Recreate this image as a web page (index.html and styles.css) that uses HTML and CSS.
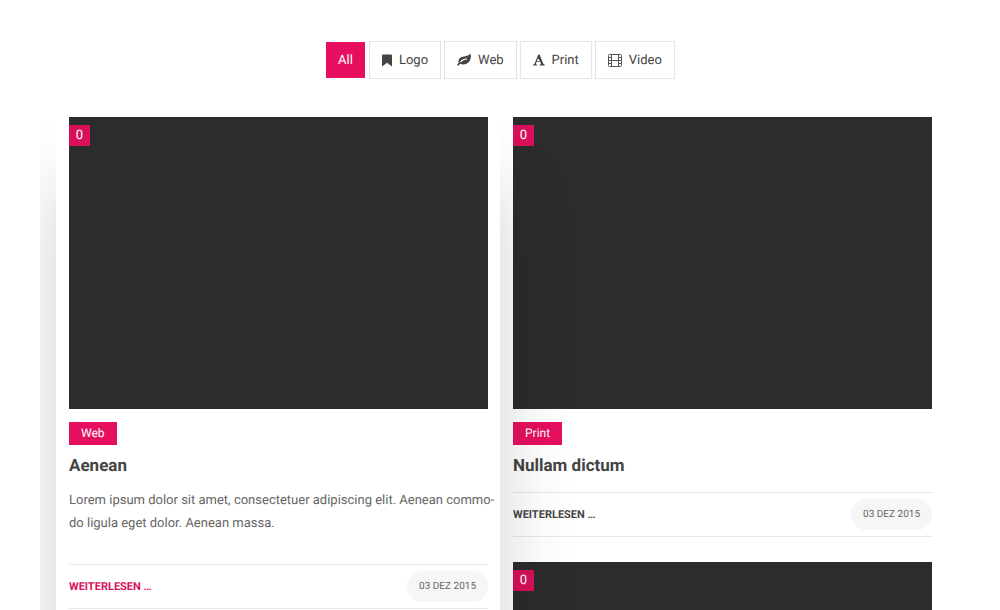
FILE: index.html
```html
<!DOCTYPE html>
<html lang="de">
<head>
<meta charset="utf-8">
<meta name="viewport" content="width=device-width, initial-scale=1">
<title>Portfolio</title>
<link rel="stylesheet" href="styles.css">
</head>
<body>
<main class="portfolio">
  <nav class="filters">
    <button class="filter active" type="button">All</button>
    <button class="filter" type="button">
      <svg class="icon-bookmark" viewBox="0 0 10 13" width="10" height="13"><path d="M1 .5h8q1 0 1 1V12.500L5 8.800 0 12.500V1.500q0-1 1-1z"/></svg>Logo
    </button>
    <button class="filter" type="button">
      <svg viewBox="0 0 14 14" width="14" height="14"><path fill-rule="evenodd" d="M13.600 1.200C14.600 5 13 9.600 9 11c-2 .7-4.300.5-5.900-.3L1.500 12.400Q.5 13 .2 12 .2 11.200 1.700 9.800 1 7.600 2.400 5.600C4.600 2.600 9.500 3.900 12 1.700Q13.100.7 13.600 1.200zM3.900 9.200C6 7.200 7.500 6.900 9.700 6.600Q10.600 6.300 10 5.600C7.300 5.500 4.900 6.400 3.100 8.400Q2.900 9.500 3.900 9.200z"/></svg>Web
    </button>
    <button class="filter" type="button">
      <svg class="icon-font" viewBox="0 0 13 13" width="12" height="12"><path fill-rule="evenodd" d="M5.700.5h1.400L11 10.400q.4 1 1.800 1.200v.9H7.200v-.9q1.700-.1 1.300-1.200L7.800 8.500H3.900l-.6 1.700q-.4 1.300 1.300 1.400v.9H.2v-.9q1.200-.2 1.700-1.500zM5.500 4.500 4.300 7.500h3.100z"/></svg>Print
    </button>
    <button class="filter" type="button">
      <svg class="icon-film" viewBox="0 0 14 13" width="14" height="13"><path d="M1.500.5h11q1 0 1 1v10q0 1-1 1h-11q-1 0-1-1v-10q0-1 1-1zM3.500.5v12M10.500.5v12M3.500 6.500h7M.5 3.500h3M.5 6.500h3M.5 9.500h3M10.500 3.500h3M10.500 6.500h3M10.500 9.500h3"/></svg>Video
    </button>
  </nav>

  <div class="board">
    <div class="column">
      <article class="card raised">
        <div class="media"><span class="count">0</span></div>
        <a class="tag" href="#web">Web</a>
        <h2 class="title">Aenean</h2>
        <p class="excerpt">Lorem ipsum dolor sit amet, consectetuer adipiscing elit. Aenean commo-<br>do ligula eget dolor. Aenean massa.</p>
        <footer class="meta">
          <a class="more" href="#aenean">WEITERLESEN …</a>
          <time class="date" datetime="2015-12-03">03 DEZ 2015</time>
        </footer>
      </article>
    </div>
    <div class="column">
      <article class="card">
        <div class="media"><span class="count">0</span></div>
        <a class="tag" href="#print">Print</a>
        <h2 class="title">Nullam dictum</h2>
        <footer class="meta">
          <a class="more" href="#nullam">WEITERLESEN …</a>
          <time class="date" datetime="2015-12-03">03 DEZ 2015</time>
        </footer>
      </article>
      <article class="card">
        <div class="media"><span class="count">0</span></div>
      </article>
    </div>
  </div>
</main>
</body>
</html>
```

FILE: styles.css
```css
* { box-sizing: border-box; }

body {
  margin: 0;
  height: 100vh;
  overflow: hidden;
  background: #fff;
  color: #444;
  font-family: Roboto, "Liberation Sans", sans-serif;
  font-size: 13px;
  text-rendering: geometricPrecision;
}

.portfolio {
  margin: 0 40px;
  padding-top: 41px;
  overflow: hidden;
}

.filters {
  display: flex;
  justify-content: center;
  gap: 3px;
}

.filter {
  display: flex;
  align-items: center;
  gap: 7px;
  height: 38px;
  padding: 0 12px;
  border: 1px solid #e4e4e4;
  background: #fff;
  color: #444;
  font: inherit;
  text-rendering: inherit;
  cursor: pointer;
}

.filter.active {
  border-color: #fff;
  background: #e60f5f;
  background-clip: padding-box;
  color: #fff;
}

.filter svg { fill: #444; }
.filter .icon-film { fill: none; stroke: #555; }

.board {
  display: grid;
  grid-template-columns: repeat(2, minmax(0, 1fr));
  padding: 25px 16px 0;
}

.card { padding: 13px 12px 12px 13px; }

.raised {
  position: relative;
  z-index: 1;
  background: #fff;
  box-shadow: 0 80px 70px rgba(0, 0, 0, 0.18);
}

.media {
  aspect-ratio: 419 / 292;
  padding-top: 8px;
  background: #2c2c2c;
}

.count {
  display: block;
  width: 21px;
  background: #d8105b;
  color: #fff;
  line-height: 21px;
  text-align: center;
}

.tag {
  display: block;
  width: fit-content;
  margin-top: 13px;
  padding: 0 12px;
  background: #e60f5f;
  color: #fff;
  font-size: 12px;
  line-height: 23px;
  text-decoration: none;
}

.title {
  margin: 9px 0 14px;
  font-size: 17px;
  font-weight: 700;
  line-height: 24px;
}

.excerpt {
  margin: -3px 0 29px;
  color: #666;
  line-height: 23px;
  white-space: nowrap;
}

.meta {
  display: flex;
  align-items: center;
  justify-content: space-between;
  height: 45px;
  border: solid #e8e8e8;
  border-width: 1px 0;
}

.more {
  color: #444;
  font-size: 11px;
  font-weight: 700;
  text-decoration: none;
}

.raised .more { color: #d8105b; }

.date {
  padding: 0 12px;
  border-radius: 16px;
  background: #f6f6f6;
  color: #666;
  font-size: 10px;
  line-height: 31px;
}
```
